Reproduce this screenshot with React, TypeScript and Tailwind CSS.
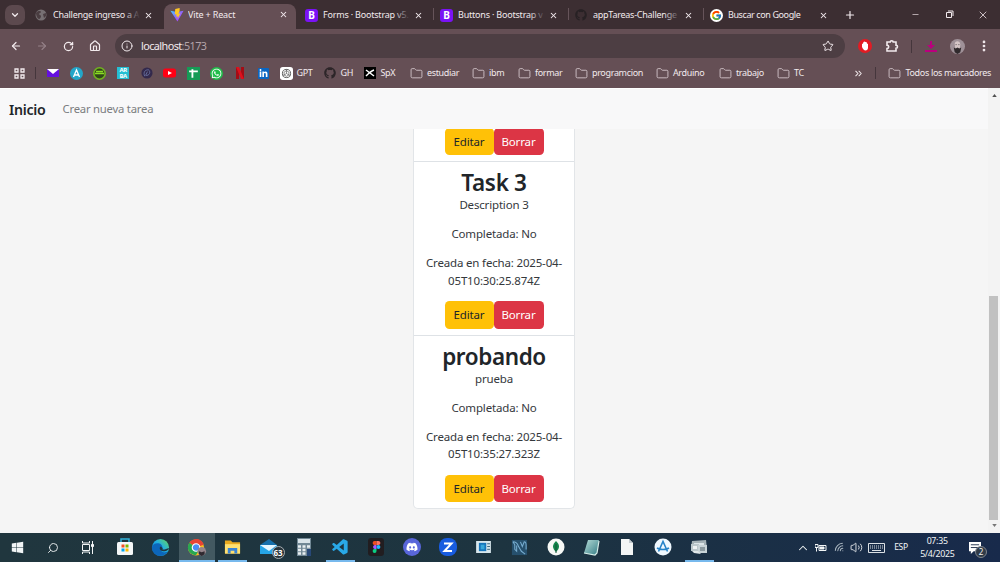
import type { ReactNode } from "react";
import { FaWhatsapp, FaLinkedinIn, FaGithub, FaDiscord, FaWindows } from "react-icons/fa";
import { FcGoogle } from "react-icons/fc";
import { VscVscode } from "react-icons/vsc";
import {
  ArrowLeft, ArrowRight, RotateCw, House, Info, Star, X, Plus, ChevronDown, ChevronUp, Minus,
  EllipsisVertical, Folder, ChevronsRight, Search, Volume2, Wifi,
} from "lucide-react";

const Bootstrap = () => (
  <span className="flex h-[13px] w-[13px] items-center justify-center rounded-[3px] bg-[#7a12f5] text-[10px] font-bold text-white">B</span>
);

const ViteLogo = () => (
  <svg viewBox="0 0 32 32" className="h-[14px] w-[14px]">
    <defs>
      <linearGradient id="vite" x1="0" y1="0" x2="1" y2="1">
        <stop offset="0" stopColor="#41d1ff" /><stop offset="0.5" stopColor="#8f66ff" /><stop offset="1" stopColor="#bd34fe" />
      </linearGradient>
    </defs>
    <path d="M31 6 17 31 1 6l15 3z" fill="url(#vite)" />
    <path d="m22 0-10 2-1 13 4-1-1 6 4-1-1 6 7-13-5 1 3-6z" fill="#ffc823" />
  </svg>
);

const GlobeIcon = () => (
  <svg viewBox="0 0 12 12" className="h-3 w-3"><circle cx="6" cy="6" r="5.5" fill="#777073" /><path d="M1 4c2-3 5-2 5-1S4 4 4 5s2 1 2 2-1 3-2 3-3-3-3-6zM8 5l3-1v3L9 9z" fill="#4a3d41" /></svg>
);

const tabs = [
  { icon: <GlobeIcon />, text: "Challenge ingreso a A", fade: true, tracking: "tracking-[-0.26px]" },
  { icon: <ViteLogo />, text: "Vite + React", active: true, tracking: "tracking-[-0.16px]" },
  { icon: <Bootstrap />, text: "Forms · Bootstrap v5.", fade: true, tracking: "tracking-[-0.2px]" },
  { icon: <Bootstrap />, text: "Buttons · Bootstrap v", fade: true, sep: true, tracking: "tracking-[-0.2px]" },
  { icon: <FaGithub size={12} className="text-[#272124]" />, text: "appTareas-Challenge", fade: true, sep: true, tracking: "tracking-[-0.25px]" },
  { icon: <span className="flex h-[13px] w-[13px] items-center justify-center rounded-full bg-white"><FcGoogle size={11} /></span>, text: "Buscar con Google", sep: true, tracking: "tracking-[-0.4px]" },
];

function TabStrip() {
  return (
    <div className="flex h-[29px] bg-[#3c2e32] text-[#f2eaed]">
      <div className="flex w-[29px] items-center pl-[5px]">
        <span className="flex h-5 w-5 items-center justify-center rounded-[7px] bg-[#5c494e]"><ChevronDown size={10} strokeWidth={3} /></span>
      </div>
      {tabs.map((t) => (
        <div key={t.text} className="relative flex w-[135px] shrink-0 items-end">
          {t.sep && <span className="absolute top-2 -left-[1px] h-3 w-px bg-[#66545a]" />}
          <div className={t.active ? "flex h-[25px] w-[132px] items-center rounded-t-[8px] bg-[#654f55] pb-1 pl-[6px]" : "flex h-[29px] w-[132px] items-center pt-px pl-[6px]"}>
            <span className="flex w-[18px]">{t.icon}</span>
            <span className="relative w-[87px] overflow-hidden text-[9px] whitespace-nowrap">
              <span className={t.tracking}>{t.text}</span>
              {t.fade && <span className="absolute inset-y-0 right-0 w-4 bg-linear-to-r from-transparent to-[#3c2e32]" />}
            </span>
            <X size={9} strokeWidth={2.8} className="ml-[4px]" />
          </div>
        </div>
      ))}
      <div className="flex w-[72px] items-center pl-[5px]"><Plus size={12} strokeWidth={2.4} /></div>
      <div className="flex flex-1 items-center text-[#d9ced2]">
        <Minus size={9} />
        <svg viewBox="0 0 9 9" className="ml-[25px] h-[9px] w-[9px]" fill="none" stroke="#f2eaed"><path d="M1.5 2.5h5v5h-5zM3 1h5v5" /></svg>
        <X size={12} strokeWidth={1.8} className="ml-[23px]" />
      </div>
    </div>
  );
}

function Toolbar() {
  return (
    <div className="flex h-[34px] items-center bg-[#654f55] text-[#f2eaed]">
      <div className="flex w-[115px] items-center pl-[10px]">
        <ArrowLeft size={12} strokeWidth={2.4} />
        <ArrowRight size={12} strokeWidth={2.2} className="ml-[14px] text-[#958188]" />
        <RotateCw size={11} strokeWidth={2.7} className="ml-[15px]" />
        <House size={12} strokeWidth={2.4} className="ml-[15px]" />
      </div>
      <div className="flex h-6 w-[730px] items-center rounded-full bg-[#4d3e43] pl-[6px]">
        <Info size={12} strokeWidth={2} />
        <span className="ml-2 w-[682px] text-[10.8px] tracking-[-0.56px]">localhost<span className="text-[#b3a3a8]">:5173</span></span>
        <Star size={12} strokeWidth={2} className="ml-[-1px] shrink-0" />
      </div>
      <div className="flex flex-1 items-center pl-[13px]">
        <svg viewBox="0 0 14 14" className="h-[14px] w-[14px]"><circle cx="7" cy="7" r="7" fill="#e31b23" /><path d="M4 6.500V5l1-.5.500-1.500 1-.5 1 .5 1 0 .5 1.500 1 .5v4c0 1-1 2.500-2.500 2.500S5 10 4 8z" fill="#fff" /></svg>
        <svg viewBox="0 0 14 14" className="ml-[13px] h-[14px] w-[14px]" fill="none" stroke="currentColor" strokeWidth="1.6">
          <path d="M2 3h3.2a1.5 1.2 0 0 1 3 0H11v3.2a1.5 1.5 0 0 1 0 3V12H2V9.5a1.7 1.7 0 0 0 0-3.4z" />
        </svg>
        <span className="ml-[12px] h-[13px] w-px bg-[#45363c]" />
        <svg viewBox="0 0 14 14" className="ml-[12px] h-[14px] w-[14px]" fill="#ba007d"><path d="M6 2h2v4h3L7 10 3 6h3zM1 11h12v2H1z" /></svg>
        <svg viewBox="0 0 16 16" className="ml-[12px] h-[15px] w-[15px]">
          <circle cx="8" cy="8" r="8" fill="#9f9198" /><path d="M5 5c1-4 6-3 6 1l-1 6H6z" fill="#d5c6c7" /><path d="m4 9 2 1 2-1 2 1 2-1-1 5-3 2-3-2z" fill="#302a2d" /><path d="M6 6h1m2 0h1" stroke="#4a4043" />
        </svg>
        <EllipsisVertical size={14} strokeWidth={2.7} className="ml-[12px]" />
      </div>
    </div>
  );
}

const favicons: ReactNode[] = [
  <svg viewBox="0 0 12 12" className="h-3 w-3"><path d="M0 2h12v8H0z" fill="#6410df" /><path d="m0 2 6 5 6-5z" fill="#fff" /></svg>,
  <svg viewBox="0 0 13 13" className="h-[13px] w-[13px]"><circle cx="6.5" cy="6.5" r="6.5" fill="#23a6c9" /><path d="M3.5 10 6.5 3l3 7M4.5 8h4" fill="none" stroke="#fff" strokeWidth="1.3" /></svg>,
  <svg viewBox="0 0 13 13" className="h-[13px] w-[13px]"><circle cx="6.5" cy="6.5" r="5.7" fill="#314719" stroke="#72b51f" strokeWidth="1.6" /><path d="M2 6.5h9M3 4.5h7" stroke="#8bdb25" strokeWidth="1.4" /></svg>,
  <span className="flex h-3 w-3 flex-col items-center justify-center bg-[#25bfd3] text-[6px] leading-[6px] font-bold text-white"><span>AR</span><span>BA</span></span>,
  <svg viewBox="0 0 13 13" className="h-3 w-3"><circle cx="6.5" cy="6.5" r="6" fill="#33294c" /><path d="M4 10c-2-5 1-7 4-7 3 2 1 7-3 6l2-4" fill="none" stroke="#67709e" /></svg>,
  <svg viewBox="0 0 13 10" className="h-[10px] w-[13px]"><rect width="13" height="9" y=".5" rx="2.500" fill="#ff0014" /><path d="m5 3 4 2-4 2z" fill="#fff" /></svg>,
  <svg viewBox="0 0 12 12" className="h-[13px] w-[13px]"><path d="M0 0h12v12H0z" fill="#159b56" /><path d="M2 4h8M5 2v8" stroke="#fff" strokeWidth="1.7" /></svg>,
  <span className="flex h-[13px] w-[13px] items-center justify-center rounded-full bg-[#20bd4a]"><FaWhatsapp size={11} className="text-white" /></span>,
  <svg viewBox="0 0 10 12" className="h-3 w-[10px]"><path d="M1 0h3v12H1zm5 0h3v12H6z" fill="#a50c15" /><path d="M1 0h3l5 12H6z" fill="#dc111d" /></svg>,
  <span className="flex h-[11px] w-[11px] items-center justify-center rounded-[1px] bg-[#0a66c2]"><FaLinkedinIn size={9} className="text-white" /></span>,
];

const named = [
  { text: "GPT", w: "w-[44px]", icon: <svg viewBox="0 0 14 14" className="h-[13px] w-[13px]"><rect width="14" height="14" rx="3" fill="#fff" /><circle cx="7" cy="7" r="4.4" fill="none" stroke="#555" /><path d="m7 4 2.6 1.5v3L7 10 4.400 8.500v-3zM7 2.500V7L3 9.500M7 7l4 2.500" fill="none" stroke="#555" strokeWidth=".7" /></svg> },
  { text: "GH", w: "w-[40px]", icon: <FaGithub size={12} className="text-[#2c2528]" /> },
  { text: "SpX", w: "w-[46px]", icon: <svg viewBox="0 0 12 12" className="h-3 w-3"><path d="M0 0h12v12H0z" fill="#000" /><path d="m2 3 8 6M2 9c2-2 5-5 8-6" stroke="#fff" strokeWidth="1.5" fill="none" /></svg> },
  { text: "estudiar", w: "w-[62px]" },
  { text: "ibm", w: "w-[46px]" },
  { text: "formar", w: "w-[57px]" },
  { text: "programcion", w: "w-[81px]" },
  { text: "Arduino", w: "w-[63px]" },
  { text: "trabajo", w: "w-[58px]" },
  { text: "TC", w: "w-[76px]" },
];

function Bookmarks() {
  return (
    <div className="flex h-[25px] items-center bg-[#654f55] pb-[5px] text-[9px] tracking-[-0.33px] whitespace-nowrap text-[#f2eaed]">
      <div className="flex w-[41.5px] items-center pl-[14px]">
        <svg viewBox="0 0 11 11" className="h-[11px] w-[11px]" fill="none" stroke="currentColor" strokeWidth="1.3"><path d="M1 1h3v3H1zM7 1h3v3H7zM1 7h3v3H1zM7 7h3v3H7z" /></svg>
        <span className="ml-[10px] h-3 w-px bg-[#45363c]" />
      </div>
      {favicons.map((f, i) => <div key={i} className="flex w-[23.35px] justify-center">{f}</div>)}
      <div className="w-[5px]" />
      {named.map((b) => (
        <div key={b.text} className={`flex shrink-0 items-center ${b.w}`}>
          <span className={b.icon ? "w-[16.5px]" : "w-[17px]"}>{b.icon ?? <Folder size={13} strokeWidth={1.8} className="text-[#cbbcc1]" />}</span>
          <span>{b.text}</span>
        </div>
      ))}
      <ChevronsRight size={11} strokeWidth={2.3} className="ml-[0.5px]" />
      <span className="ml-[11px] h-3 w-px bg-[#45363c]" />
      <Folder size={13} strokeWidth={1.8} className="mr-1 ml-[12px] text-[#cbbcc1]" />
      <span>Todos los marcadores</span>
    </div>
  );
}

function Buttons() {
  return (
    <div className="flex h-[27.5px] w-[99px] text-[11.5px] tracking-[-0.15px]">
      <button className="w-[49px] rounded-[4.5px] bg-[#ffc107] text-[#212529]">Editar</button>
      <button className="w-[50px] rounded-[4.5px] bg-[#dc3545] text-white">Borrar</button>
    </div>
  );
}

function Task({ title, titleTracking, description, date }: { title: string; titleTracking: string; description: string; date: string }) {
  return (
    <article className="flex h-[173.5px] shrink-0 flex-col items-center border-t border-[#dee2e6] pt-2 text-center text-[11.5px] leading-[17.6px] tracking-[-0.17px] text-[#34383c]">
      <h2 className={`h-[26px] text-[22.5px] leading-[26px] font-[560] text-[#212529] ${titleTracking}`}>{title}</h2>
      <p className="mb-[11.7px]">{description}</p>
      <p className="mb-[11.5px]">Completada: No</p>
      <p className="mb-[11.7px]">Creada en fecha: 2025-04-<br />{date}</p>
      <Buttons />
    </article>
  );
}

function Page() {
  return (
    <div className="flex h-[445px] bg-[#f5f5f5] text-[#212529]">
      <main className="w-[988px]">
        <nav className="flex h-[41px] items-center border-t border-white bg-[#f8f8f9] pt-px pl-[9px]">
          <span className="w-[53.5px] text-[14.2px] font-[560] tracking-[-0.3px]">Inicio</span>
          <span className="text-[11.3px] tracking-[-0.22px] text-[#7b7d80]">Crear nueva tarea</span>
        </nav>
        <section className="ml-[413px] h-[380px] w-[162px] overflow-hidden rounded-b-[5px] border-x border-b border-[#e2e5e8] bg-white">
          <div className="flex h-[32px] items-end justify-center overflow-hidden pb-[6px]"><Buttons /></div>
          <Task title="Task 3" titleTracking="tracking-[-0.3px]" description="Description 3" date="05T10:30:25.874Z" />
          <Task title="probando" titleTracking="tracking-[-0.4px]" description="prueba" date="05T10:35:27.323Z" />
        </section>
      </main>
      <div className="flex w-3 flex-col items-center bg-[#f3f3f3]">
        <svg viewBox="0 0 6 4" className="mt-[6px] h-[3px] w-[5px]"><path d="m0 4 3-4 3 4z" fill="#505050" /></svg>
        <div className="mt-[199px] mr-px h-[224px] w-[9px] bg-[#c1c1c1]" />
        <svg viewBox="0 0 6 4" className="mt-[4px] h-[3px] w-[5px]"><path d="m0 0 3 4 3-4z" fill="#777" /></svg>
      </div>
    </div>
  );
}

const apps: { icon: ReactNode; open?: boolean; active?: boolean }[] = [
  { icon: <svg viewBox="0 0 18 18" className="h-[18px] w-[18px]"><path d="M5 4V1h8v3" fill="none" stroke="#32b4dc" strokeWidth="1.5" /><rect x="1" y="4" width="16" height="13" rx="1.5" fill="#f4f7f8" /><path d="M5.500 6.500h3v3h-3z" fill="#f05025" /><path d="M9.500 6.500h3v3h-3z" fill="#7bb700" /><path d="M5.500 10.500h3v3h-3z" fill="#00a4ef" /><path d="M9.500 10.500h3v3h-3z" fill="#ffb900" /></svg> },
  { icon: <svg viewBox="0 0 20 20" className="h-[19px] w-[19px]"><defs><linearGradient id="edge" x1="0" y1="1" x2="1" y2="0"><stop stopColor="#0869c4" /><stop offset=".55" stopColor="#20aee2" /><stop offset="1" stopColor="#6bdb53" /></linearGradient></defs><circle cx="10" cy="10" r="9" fill="url(#edge)" /><path d="M1 10c1-6 11-6 11 0 0 2-2 2-1 4 2 2 5 1 7 0-6 9-17 4-17-4z" fill="#0c66ba" /><path d="M10 9c-2 2 0 5 3 5 2 0 5-1 6-3-1-1-5 2-7 1 1-1 0-2-2-3z" fill="#203840" /></svg> },
  { active: true, open: true, icon: <svg viewBox="0 0 20 20" className="h-[19px] w-[20px]"><circle cx="9" cy="10" r="8.500" fill="#f8bd20" /><path d="M9 10 2 5C6-1 15 0 17 7z" fill="#e84335" /><path d="M9 10 2 5c-4 6 0 13 7 13l3-5z" fill="#28a852" /><circle cx="9" cy="10" r="4" fill="#4b8cf5" stroke="#fff" strokeWidth="1.2" /><circle cx="15" cy="14" r="4.500" fill="#95858b" /><path d="m12 14 3 1 3-1v3l-3 2-3-2z" fill="#302930" /></svg> },
  { open: true, icon: <svg viewBox="0 0 18 16" className="h-4 w-[17px]"><path d="M1 1h6l2 2h8v12H1z" fill="#e9a91f" /><path d="M1 5h16v10H1z" fill="#ffe071" /><path d="M4 9h10v6h-3v-3H7v3H4z" fill="#3983d5" /></svg> },
  { icon: <div className="relative"><svg viewBox="0 0 20 16" className="h-4 w-5"><path d="m1 6 9-6 8 6v9H1z" fill="#1670ac" /><path d="M1 6h17v9H1z" fill="#26a5e8" /><path d="m1 6 9 6 8-6z" fill="#e4f6ff" /></svg><span className="absolute -right-[6px] -bottom-[4px] flex h-[13px] w-[13px] items-center justify-center rounded-full border border-[#a5adb2] bg-[#28343b] text-[8px] font-bold text-white">63</span></div> },
  { icon: <svg viewBox="0 0 14 18" className="h-[18px] w-[14px]"><path d="M0 0h14v18H0z" fill="#718895" /><path d="M1 1h12v4H1z" fill="#d9e4e9" /><path d="M1 8.500h12M1 12h12M1 15.500h8" stroke="#e9eff2" strokeWidth="2.300" strokeDasharray="3 1.500" /><path d="M10 11h4v7h-4z" fill="#274878" /></svg> },
  { open: true, icon: <VscVscode size={19} className="text-[#29a9e8]" /> },
  { icon: <span className="flex h-[18px] w-4 items-center justify-center rounded-[3px] bg-[#211d20]"><svg viewBox="0 0 9 13" className="h-3 w-[9px]"><path d="M4.500 0h-2a2.200 2.200 0 0 0 0 4.400h2z" fill="#f24e1e" /><path d="M4.500 0h2a2.200 2.200 0 0 1 0 4.400h-2z" fill="#ff7262" /><path d="M4.500 4.400h-2a2.200 2.200 0 0 0 0 4.300h2z" fill="#a259ff" /><circle cx="6.600" cy="6.500" r="2.100" fill="#1abcfe" /><path d="M4.500 8.700h-2a2.100 2.100 0 1 0 2 2z" fill="#0acf83" /></svg></span> },
  { icon: <span className="flex h-[18px] w-[18px] items-center justify-center rounded-full bg-[#5966da]"><FaDiscord size={12} className="text-white" /></span> },
  { icon: <svg viewBox="0 0 18 18" className="h-[18px] w-[18px]"><rect width="18" height="18" rx="8" fill="#185ce0" /><path d="M5 5.500h7.500l-7 7.500H13" fill="none" stroke="#fff" strokeWidth="2" /></svg> },
  { icon: <svg viewBox="0 0 16 13" className="h-3 w-[15px]"><path d="M0 0h16v13H0z" fill="#d8e7ed" /><path d="M3 2h8v9H3z" fill="#1675bb" /><path d="M5 4h4v5H5z" fill="#38a7d9" /><path d="M12 3h3M12 6h3M12 9h3" stroke="#2d5d75" /></svg> },
  { icon: <svg viewBox="0 0 18 18" className="h-[17px] w-[17px]" fill="none"><path d="M1 1h16v16H1z" fill="#26506d" /><path d="M2 3c3 0 5 2 6 5l3 5 4 3M2 3l2 3v5l2 2V7M10 3l2 5 2-5c2 0 2 2 2 4v4" stroke="#78add0" strokeWidth="1.100" /></svg> },
  { icon: <svg viewBox="0 0 18 18" className="h-[18px] w-[18px]"><circle cx="9" cy="9" r="8.500" fill="#f6f8f5" /><path d="M9 3c4 4 4 7 0 11-4-4-4-7 0-11z" fill="#118449" /><path d="M9 6v9" stroke="#145338" /></svg> },
  { icon: <svg viewBox="0 0 17 17" className="h-[17px] w-[17px]"><defs><linearGradient id="notes" x1="0" y1="0" x2="1" y2="1"><stop stopColor="#b5dcd7" /><stop offset="1" stopColor="#347c85" /></linearGradient></defs><path d="M5 1h11l-2 13-2 2-11-2z" fill="url(#notes)" /><path d="m1 14 11 2 2-2 2-12" fill="none" stroke="#d6eee9" strokeWidth="1.200" /></svg> },
  { icon: <svg viewBox="0 0 12 16" className="h-4 w-3"><path d="M0 0h8l4 4v12H0z" fill="#f3f5f5" /><path d="M8 0v4h4z" fill="#c3cbd0" /></svg> },
  { icon: <svg viewBox="0 0 18 18" className="h-[18px] w-[18px]"><circle cx="9" cy="9" r="8.500" fill="#eff8ff" /><path d="m4.500 13.500 4.500-10 4.500 10M3 10c3 2 9 2 12 0" fill="none" stroke="#2683c9" strokeWidth="1.600" /></svg> },
  { open: true, icon: <svg viewBox="0 0 18 16" className="h-4 w-[18px]"><path d="m2 2 14-1 1 9H1z" fill="#a5b2b7" /><path d="M4 4h10v4H4z" fill="#dce5e8" /><path d="M1 5h8v7H1z" fill="#bcc8cc" /><path d="M3 7h4v3H3z" fill="#eef2f3" /><path d="M8 6h9v8H8z" fill="#c8d3d7" /><path d="M10 8h5v4h-5z" fill="#8b999f" /><path d="m2 12 6 0 3 3-7-1z" fill="#e1e8ea" /></svg> },
];

function Taskbar() {
  return (
    <footer className="flex h-[29px] items-center bg-linear-to-r from-[#20363e] via-[#1d3440] to-[#182a4b] text-[#f2f5f6]">
      <div className="flex w-[107px] items-center pl-[11px]">
        <FaWindows size={13} />
        <Search size={12} strokeWidth={1.8} className="ml-[23px] -scale-x-100" />
        <svg viewBox="0 0 13 13" className="ml-[22px] h-[13px] w-[13px]" fill="none" stroke="currentColor"><path d="M1.500 3.500h7v6h-7zM1.500 0v2h7V0M1.500 13v-2h7v2M11.500 0v13" /><path d="M10.500 3.500h2v2h-2z" fill="currentColor" /></svg>
      </div>
      {apps.map((a, i) => (
        <div key={i} className={a.active ? "flex h-[29px] w-[35.9px] flex-col items-center bg-[#435961]" : "flex h-[29px] w-[35.9px] flex-col items-center"}>
          <div className="flex h-[27px] items-center pt-[1px]">{a.icon}</div>
          {a.open && <div className={a.active ? "h-[2px] w-full bg-[#77b9ed]" : "h-[2px] w-[29px] bg-[#77b9ed]"} />}
        </div>
      ))}
      <div className="flex flex-1 items-center pl-[79px]">
        <ChevronUp size={14} strokeWidth={1.8} className="shrink-0" />
        <svg viewBox="0 0 12 9" className="ml-[5px] h-[9px] w-3" fill="none" stroke="currentColor"><path d="M4 2.500h7v5H4z" /><path d="M5 4h4v2H5z" fill="currentColor" /><path d="M0 1.500h3v3H0zM1.500 4.500v4" /></svg>
        <Wifi size={12} className="ml-[7px] -rotate-45 text-[#abb7c1]" />
        <Volume2 size={13} strokeWidth={1.6} className="ml-[4px]" />
        <svg viewBox="0 0 17 10" className="ml-[5px] h-[10px] w-[17px]" fill="none" stroke="currentColor" strokeWidth=".9"><path d="M.5.500h16v9H.500z" /><path d="M2 3h13M2 5h13" strokeDasharray="1 1" /><path d="M4 7.500h9" /></svg>
        <span className="ml-[9px] w-[26px] text-[8.6px] tracking-[-0.3px]">ESP</span>
        <div className="w-[34px] text-center text-[8.8px] leading-[13px] tracking-[-0.3px] whitespace-nowrap"><div>07:35</div><div>5/4/2025</div></div>
        <div className="relative ml-[15px]">
          <svg viewBox="0 0 13 13" className="h-3 w-3"><path d="M0 0h13v10H5l-3 3v-3H0z" fill="#fff" /><path d="M2 3h9M2 6h9" stroke="#1b2c49" /></svg>
          <span className="absolute top-[4px] left-[6px] flex h-[12px] w-[12px] items-center justify-center rounded-full border border-[#80868e] bg-[#303b48] text-[8px]">2</span>
        </div>
      </div>
    </footer>
  );
}

export default function App() {
  return (
    <div className="flex h-[562px] w-[1000px] flex-col overflow-hidden font-['Noto_Sans','Open_Sans',sans-serif]">
      <TabStrip />
      <Toolbar />
      <Bookmarks />
      <Page />
      <Taskbar />
    </div>
  );
}
